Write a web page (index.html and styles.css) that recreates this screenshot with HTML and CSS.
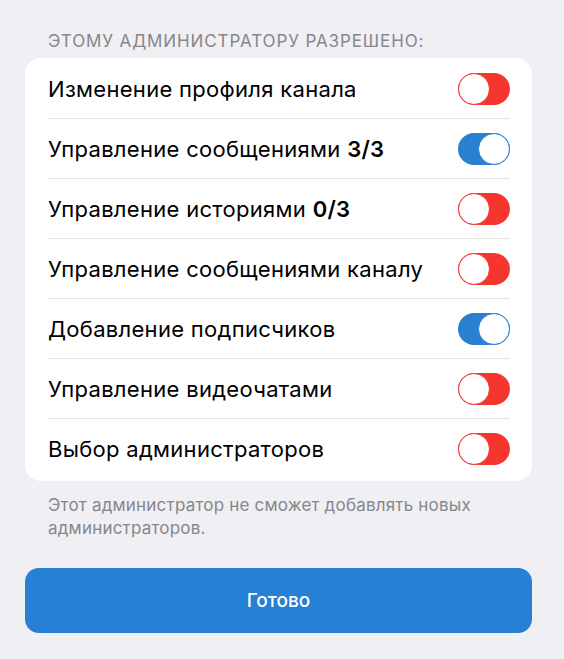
FILE: index.html
```html
<!DOCTYPE html>
<html lang="ru">
<head>
  <meta charset="UTF-8" />
  <meta name="viewport" content="width=device-width, initial-scale=1.0"/>
  <title>Права администратора</title>
  <link rel="stylesheet" href="styles.css">
</head>
<body>
  <div class="screen">
    <div class="section-title">Этому администратору разрешено:</div>

    <div class="card">
      <div class="row">
        <span class="label">Изменение профиля канала</span>
        <span class="toggle off"></span>
      </div>
      <div class="row">
        <span class="label">Управление сообщениями <b>3/3</b></span>
        <span class="toggle on"></span>
      </div>
      <div class="row">
        <span class="label">Управление историями <b>0/3</b></span>
        <span class="toggle off"></span>
      </div>
      <div class="row">
        <span class="label">Управление сообщениями каналу</span>
        <span class="toggle off"></span>
      </div>
      <div class="row">
        <span class="label">Добавление подписчиков</span>
        <span class="toggle on"></span>
      </div>
      <div class="row">
        <span class="label">Управление видеочатами</span>
        <span class="toggle off"></span>
      </div>
      <div class="row">
        <span class="label">Выбор администраторов</span>
        <span class="toggle off"></span>
      </div>
    </div>

    <div class="note">Этот администратор не сможет добавлять новых администраторов.</div>

    <button class="done">Готово</button>
  </div>
</body>
</html>
```

FILE: styles.css
```css
html, body {
  margin: 0;
  padding: 0;
  background: #efeff4;
}
body {
  font-family: Inter, "Noto Sans", sans-serif;
  color: #000;
}
.screen {
  padding: 31px 32px 0 25px;
}
.section-title {
  text-transform: uppercase;
  color: #86868b;
  font-size: 17px;
  line-height: 20px;
  letter-spacing: 0.9px;
  padding-left: 23px;
  margin-bottom: 7px;
}
.card {
  background: #fff;
  border-radius: 16px;
  padding: 1px 22px 2px 23px;
}
.row {
  height: 60px;
  display: flex;
  align-items: center;
  justify-content: space-between;
  border-bottom: 1px solid #e3e3e6;
  box-sizing: border-box;
}
.row:last-child {
  border-bottom: none;
}
.label {
  font-size: 22px;
  letter-spacing: 0.3px;
}
.label b {
  font-weight: 600;
}
.toggle {
  position: relative;
  width: 52px;
  height: 32px;
  border-radius: 16px;
}
.toggle::after {
  content: "";
  position: absolute;
  top: 0;
  width: 32px;
  height: 32px;
  border-radius: 50%;
  background: #fff;
  box-sizing: border-box;
}
.toggle.off {
  background: #f4362f;
}
.toggle.off::after {
  left: 0;
  border: 1.5px solid #f4362f;
}
.toggle.on {
  background: #2a7fd0;
}
.toggle.on::after {
  right: 0;
  border: 1.5px solid #2a7fd0;
}
.note {
  color: #86868b;
  font-size: 17px;
  line-height: 23px;
  letter-spacing: 0.2px;
  padding: 13px 0 0 23px;
}
.done {
  display: block;
  width: 100%;
  height: 65px;
  margin-top: 28px;
  border: none;
  border-radius: 14px;
  background: #2680d3;
  color: #fff;
  font-family: inherit;
  font-size: 19px;
  font-weight: 500;
}
```
